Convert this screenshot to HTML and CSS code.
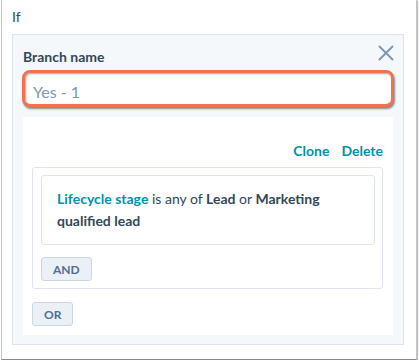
FILE: index.html
```html
<!DOCTYPE html>
<html lang="en">
<head>
<meta charset="UTF-8" />
<meta name="viewport" content="width=device-width,initial-scale=1" />
<title>Branch editor</title>
<link rel="stylesheet" href="styles.css">
</head>
<body>
  <div class="shot">
    <div class="if-label">If</div>

    <!-- branch panel -->
    <section class="branch-panel">
      <button class="btn-close" type="button" aria-label="Close">
        <svg width="16" height="16" viewBox="0 0 16 16">
          <path d="M1.5 1.5 L14.5 14.5 M14.5 1.5 L1.5 14.5" />
        </svg>
      </button>
      <label class="field-label" for="branchName">Branch name</label>
      <input id="branchName" class="name-input" type="text" placeholder="Yes - 1" />

      <div class="branch-body">
        <div class="branch-actions">
          <a href="#">Clone</a>
          <a href="#">Delete</a>
        </div>
        <div class="and-group">
          <div class="filter-card">
            <p><a href="#" class="prop">Lifecycle stage</a> is any of <b>Lead</b> or <b>Marketing</b></p>
            <p><b>qualified lead</b></p>
          </div>
          <button class="btn-logic" type="button">AND</button>
        </div>
        <button class="btn-logic" type="button">OR</button>
      </div>
    </section>
  </div>
</body>
</html>
```

FILE: styles.css
```css
/* ---------- Theme ---------- */
:root {
  --text: #33475b;
  --link: #0091ae;
  --muted: #7c98b6;
  --panel-bg: #f5f8fa;
  --line: #dfe3eb;
  --highlight: #f2714e;
}
/* ---------- Base ---------- */
* { box-sizing: border-box; }
body {
  margin: 0;
  background: #fff;
  font-family: Lato, "Open Sans", sans-serif;
  font-size: 14px;
  line-height: 20px;
  color: var(--text);
}
/* ---------- Frame ---------- */
.shot {
  width: 416px;
  height: 360px;
  margin-left: 1px;
  padding: 7px 12px 0 10px;
  border: 1px solid #c4c4c4;
  border-top: none;
  border-bottom-color: #8a8a8a;
  box-shadow: 1px 1px 1px rgba(0, 0, 0, 0.25);
}
.if-label { margin-bottom: 7px; }

/* ---------- Branch panel ---------- */
.branch-panel {
  position: relative;
  background: var(--panel-bg);
  border: 1px solid var(--line);
  padding: 12px 10px 9px 10px;
}
.btn-close {
  position: absolute;
  top: 10px;
  right: 9px;
  padding: 0;
  border: 0;
  background: none;
  line-height: 0;
  cursor: pointer;
}
.btn-close svg { stroke: var(--muted); stroke-width: 2; fill: none; stroke-linecap: round; }

.field-label {
  display: block;
  font-weight: 700;
  margin-bottom: 3px;
}
.name-input {
  display: block;
  width: calc(100% + 2px);
  margin-left: -1px;
  height: 37px;
  padding: 6px 8px 0;
  font: inherit;
  font-size: 16px;
  color: var(--text);
  background: #fff;
  border: 3px solid var(--highlight);
  border-radius: 8px;
  box-shadow: 1px 2px 2px rgba(0, 0, 0, 0.45), inset 1px 1px 2px rgba(0, 0, 0, 0.35);
  outline: none;
}
.name-input::placeholder { color: var(--muted); }

.branch-body {
  margin-top: 10px;
  background: #fff;
  padding: 24px 10px 9px 9px;
}
.branch-actions {
  display: flex;
  justify-content: flex-end;
  gap: 12px;
  margin-bottom: 6px;
}
.branch-actions a {
  color: var(--link);
  font-weight: 700;
  text-decoration: none;
}

.and-group {
  border: 1px solid var(--line);
  border-radius: 3px;
  padding: 7px 7px 7px 8px;
  margin-bottom: 13px;
}
.filter-card {
  border: 1px solid var(--line);
  border-radius: 3px;
  padding: 12px 15px;
  line-height: 22px;
  margin-bottom: 12px;
}
.filter-card p { margin: 0; }
.filter-card .prop {
  color: var(--link);
  font-weight: 700;
  text-decoration: none;
}
.filter-card b { font-weight: 700; }

.btn-logic {
  display: block;
  height: 24px;
  padding: 0 11px;
  font-family: inherit;
  font-size: 12px;
  font-weight: 700;
  color: #506e91;
  background: #eaf0f6;
  border: 1px solid #cbd6e2;
  border-radius: 3px;
}
```
